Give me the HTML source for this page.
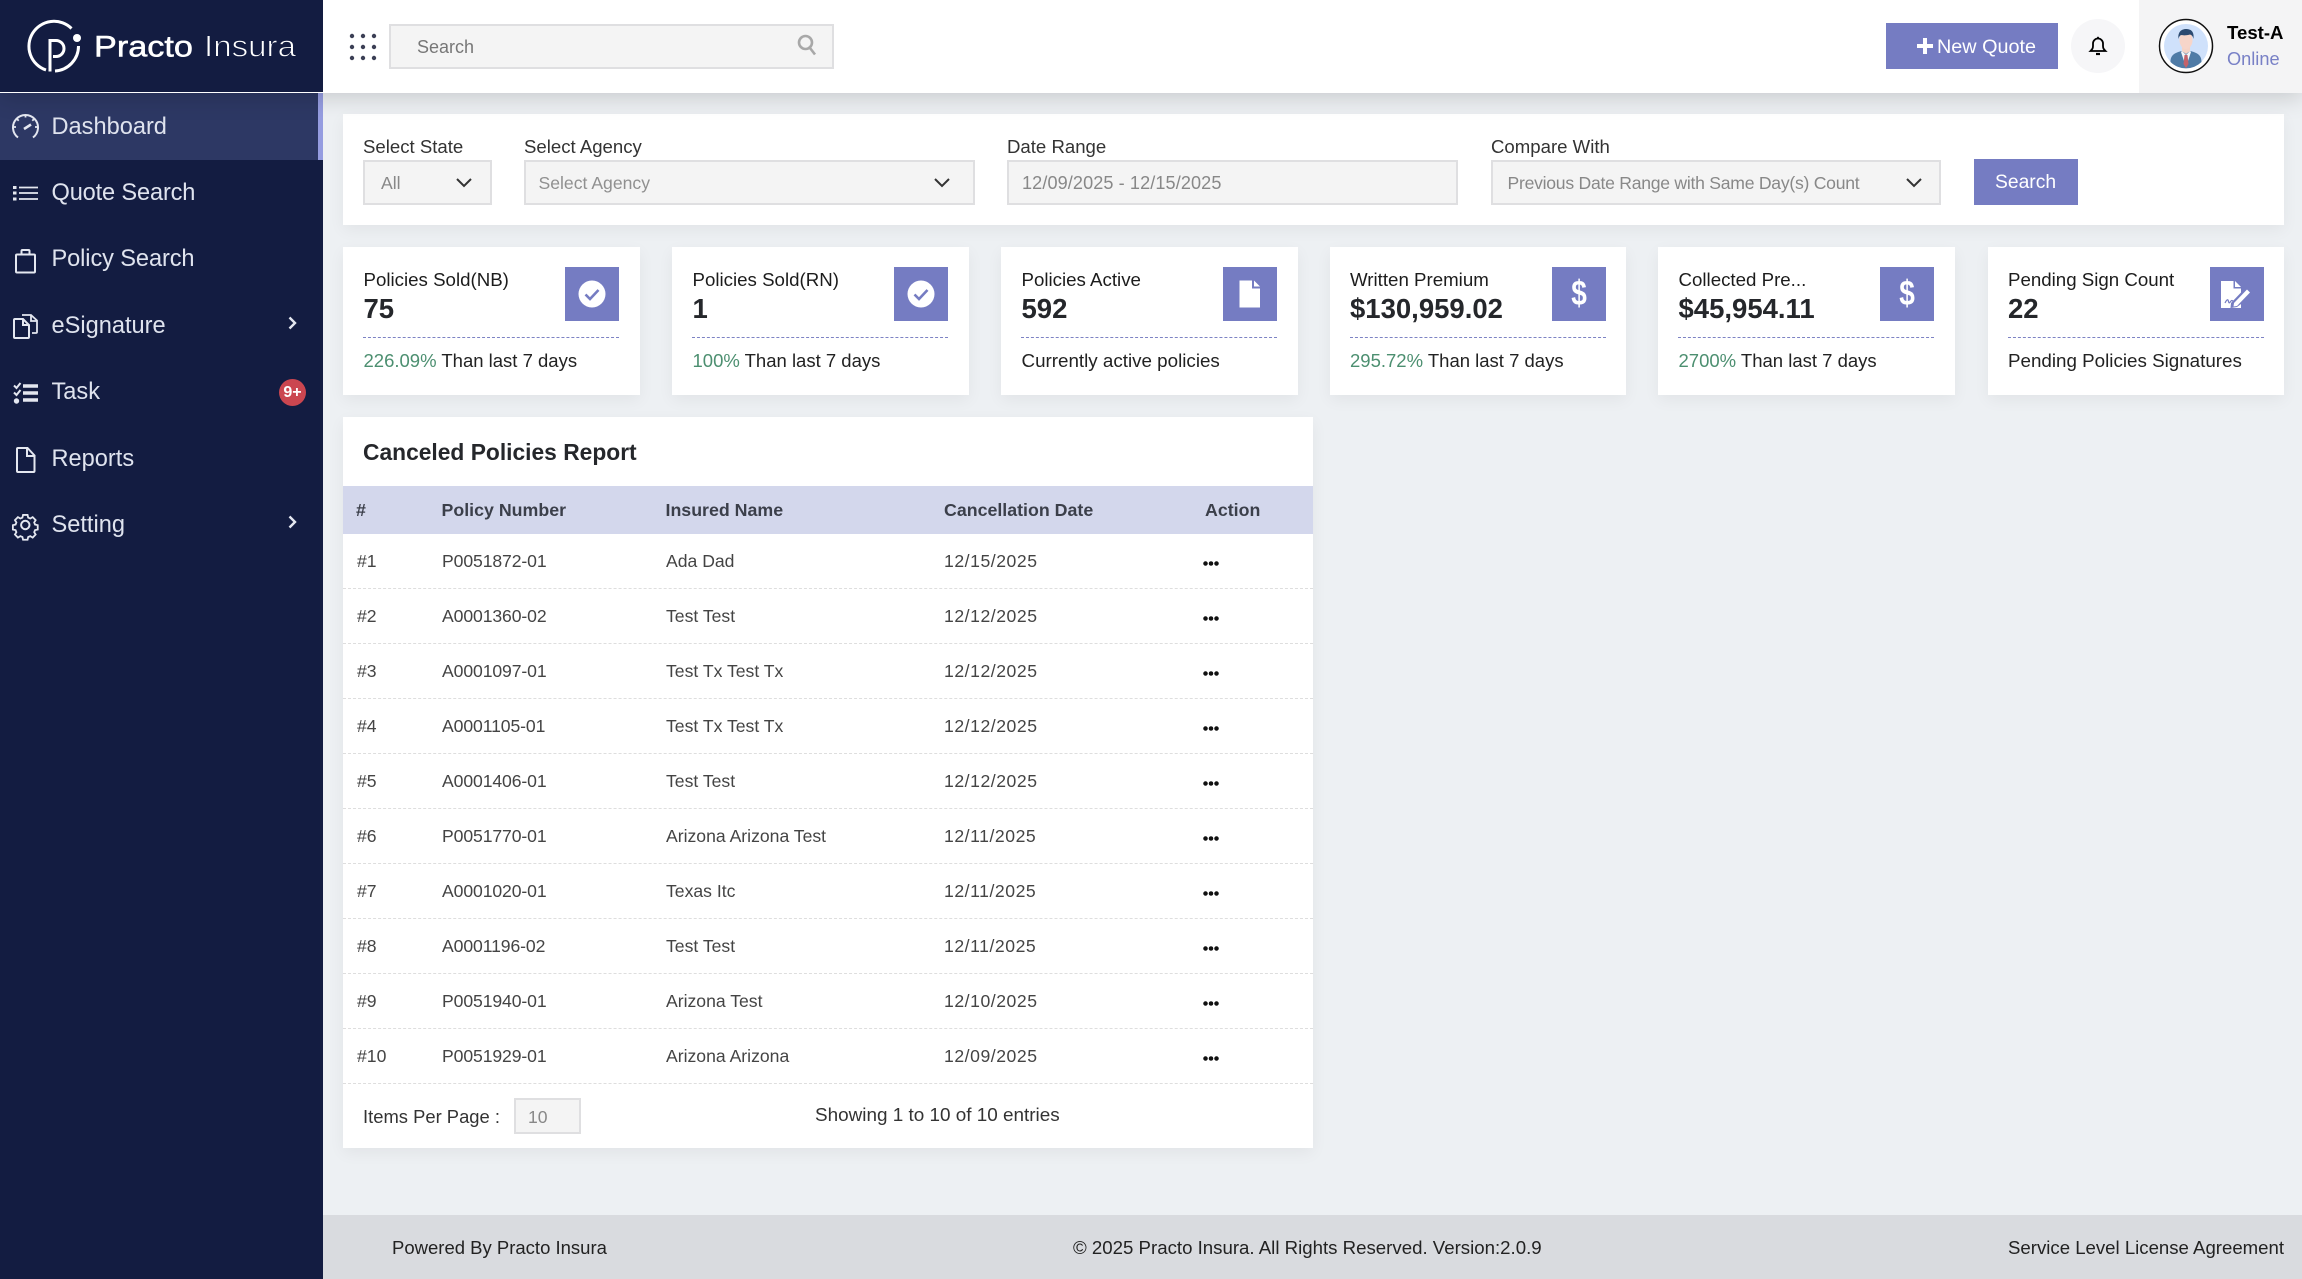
<!DOCTYPE html>
<html lang="en">
<head>
<meta charset="utf-8">
<title>Practo Insura Dashboard</title>
<style>
html,body{margin:0;padding:0;width:2302px;height:1279px;overflow:hidden;background:#edf0f3;font-family:"Liberation Sans",Arial,sans-serif;color:#222}
*{box-sizing:border-box}
.a{position:absolute}
.t{position:absolute;white-space:nowrap;line-height:30px;height:30px}
#side{position:absolute;left:0;top:0;width:323px;height:1279px;background:#131c41}
#hdr{position:absolute;left:0;top:0;width:2302px;height:93px;background:#fff;box-shadow:0 4px 22px rgba(0,0,0,.17);z-index:5}
#logo{position:absolute;left:0;top:0;width:323px;height:92px;background:#131c41}
.nav{position:absolute;left:51.5px;color:#dfe3ee;font-size:23.6px;white-space:nowrap;line-height:30px}
.ni{position:absolute;left:0;overflow:visible}
.card{position:absolute;background:#fff;box-shadow:0 5px 15px rgba(0,0,0,.05)}
.ctl{position:absolute;background:#f4f4f4;border:2px solid #dfdfe1;top:160px;height:45px}
.lab{font-size:18.6px;color:#333;top:132px}
.val{font-size:17.6px;color:#888;top:167.5px}
.stat{top:247px;width:296.5px;height:148px}
.stat .ti{left:20.5px;top:18px;font-size:18.7px;color:#1c1c1c}
.stat .v{left:20.5px;top:47px;font-size:27.5px;font-weight:bold;color:#25272b}
.stat .ic{position:absolute;left:222px;top:20px;width:54px;height:54px;background:#757cc2}
.stat .ic svg{position:absolute;left:0;top:0}
.stat .ln{position:absolute;left:20px;width:256px;top:90px;border-top:1.5px dashed #7d83c4}
.stat .f{left:20.5px;top:98.5px;font-size:18.8px;color:#222}
.stat .f.s{font-size:18.5px}
.stat .f b{font-weight:normal;color:#4c8f70}
.th{position:absolute;top:494.5px;font-size:17.8px;font-weight:bold;color:#3b3f4a;white-space:nowrap;line-height:30px}
.row{position:absolute;left:343px;width:970px;height:55px;border-bottom:1px dashed #dedede;z-index:1}
.row span{position:absolute;top:12px;font-size:17.6px;line-height:30px;color:#444;white-space:nowrap}
.row span:nth-child(1){left:14px}
.row span:nth-child(2){left:99px;letter-spacing:-.1px}
.row span:nth-child(3){left:323px}
.row span:nth-child(4){left:601px;letter-spacing:.55px}
.row i{position:absolute;left:859.5px;top:26.5px;width:16px;height:5px;background:radial-gradient(circle at 2.5px 2.5px,#111 2.1px,transparent 2.4px) 0 0/5.5px 5px repeat-x}
.dl{left:0;width:54px;top:11px;text-align:center;font-size:33px;font-weight:bold;color:#fff;transform:scale(.85,1.08)}
</style>
</head>
<body>
<div id="side">
  <div class="a" style="left:0;top:93px;width:323px;height:67px;background:#2d3864"></div>
  <div class="a" style="left:318px;top:93px;width:5px;height:67px;background:#959ce0"></div>

  <svg class="ni" style="top:0" width="60" height="560" fill="none" stroke="#e4e7f0" stroke-width="2">
    <!-- gauge -->
    <path d="M18 137.5a12.5 12.5 0 1 1 15 0"/><path d="M13.5 127h2.5M35 127h2.5M25.5 115v2.5M17 119l1.7 1.7M34 119l-1.7 1.7" stroke-width="1.8"/>
    <path d="M24 129l7-4.500" stroke-width="2.600"/>
    <!-- list -->
    <path d="M19 187.500h19M19 193h19M19 199h19" stroke-width="1.700"/>
    <path d="M13 187.500h3.500M13 193h3.500M13 199h3.500" stroke-width="3"/>
    <!-- clipboard -->
    <rect x="16" y="254.500" width="19" height="18" rx="1"/><path d="M21.500 254.500v-3.500a1 1 0 0 1 1-1h6a1 1 0 0 1 1 1v3.500"/>
    <!-- esign -->
    <path d="M14 320a1 1 0 0 1 1-1h8l6 6v12a1 1 0 0 1-1 1h-13a1 1 0 0 1-1-1z"/><path d="M23 319v6h6"/>
    <path d="M22 315h9l6 5.500v11.500a1 1 0 0 1-1 1h-4" stroke-width="1.800"/><path d="M31 315v6h6" stroke-width="1.800"/>
    <!-- task -->
    <path d="M23 386h15M23 393h15M23 400h15" stroke-width="3.400"/>
    <path d="M14 385.500l2.500 2.500 4-5M14 392.500l2.500 2.500 4-5" stroke-width="2"/>
    <circle cx="16.500" cy="401" r="2.700" fill="#e4e7f0" stroke="none"/>
    <!-- report -->
    <path d="M17 449a1 1 0 0 1 1-1h9.500l7 7.500v15.500a1 1 0 0 1-1 1h-15.500a1 1 0 0 1-1-1z"/><path d="M27 448v8h7.500"/>
    <!-- gear -->
    <circle cx="25.300" cy="525" r="4.200"/>
    <path transform="translate(25.300 525) scale(.9) translate(-25.300 -525)" d="M22.800 513.800h5l.7 3 2.300 1 2.700-1.600 3.300 3.400-1.600 2.600.9 2.300 3 .7v4.800l-3 .7-.9 2.300 1.600 2.600-3.300 3.400-2.700-1.600-2.300 1-.7 3h-5l-.7-3-2.300-1-2.700 1.600-3.300-3.400 1.600-2.600-.9-2.300-3-.7v-4.800l3-.7.9-2.300-1.600-2.600 3.300-3.400 2.700 1.600 2.300-1z" stroke-width="2"/>
  </svg>

  <div class="nav" style="top:112px">Dashboard</div>
  <div class="nav" style="top:178px;letter-spacing:-.15px">Quote Search</div>
  <div class="nav" style="top:244px;letter-spacing:-.1px">Policy Search</div>
  <div class="nav" style="top:311px">eSignature</div>
  <div class="nav" style="top:377px">Task</div>
  <div class="nav" style="top:444px">Reports</div>
  <div class="nav" style="top:510px">Setting</div>

  <svg class="a" style="left:285px;top:314px" width="16" height="18" fill="none" stroke="#e4e7f0" stroke-width="2.400"><path d="M4.500 3.500l5.500 5.500-5.500 5.500"/></svg>
  <svg class="a" style="left:285px;top:513px" width="16" height="18" fill="none" stroke="#e4e7f0" stroke-width="2.400"><path d="M4.500 3.500l5.500 5.500-5.500 5.500"/></svg>
  <div class="a" style="left:279px;top:378.500px;width:27px;height:27px;border-radius:50%;background:#cb4650;color:#fff;font-size:16px;font-weight:bold;text-align:center;line-height:27px">9+</div>
</div>

<div id="hdr">
  <div id="logo">
    <svg width="323" height="92" fill="none">
      <g stroke="#fff" stroke-width="3">
        <path d="M71.500 28.500A25 25 0 1 0 46 70"/>
        <path d="M78.500 46A25 25 0 0 1 55 71"/>
        <path d="M50 71.500V40.500H56A8 8 0 0 1 56 56.500H53"/>
      </g>
      <circle cx="77" cy="38" r="4" fill="#fff"/>
      <text x="94" y="56.500" font-family="Liberation Sans" font-size="30" fill="#fff" stroke="#fff" stroke-width=".5" textLength="99" lengthAdjust="spacingAndGlyphs">Practo</text>
      <text x="204" y="56.500" font-family="Liberation Sans" font-size="31" fill="#fff" stroke="#131c41" stroke-width=".9" textLength="92" lengthAdjust="spacingAndGlyphs">Insura</text>
    </svg>
  </div>
  <svg class="a" style="left:345px;top:30px" width="36" height="34" fill="#3b3f55">
    <circle cx="7" cy="6" r="2.200"/><circle cx="18" cy="6" r="2.200"/><circle cx="29" cy="6" r="2.200"/>
    <circle cx="7" cy="17" r="2.200"/><circle cx="18" cy="17" r="2.200"/><circle cx="29" cy="17" r="2.200"/>
    <circle cx="7" cy="28" r="2.200"/><circle cx="18" cy="28" r="2.200"/><circle cx="29" cy="28" r="2.200"/>
  </svg>
  <div class="a" style="left:389px;top:24px;width:445px;height:45px;background:#f4f4f4;border:2px solid #dfdfe1"></div>
  <div class="t" style="left:417px;top:31.500px;font-size:18px;color:#777">Search</div>
  <svg class="a" style="left:796px;top:33px" width="22" height="24" fill="none" stroke="#a8a8a8" stroke-width="2.600"><circle cx="9.500" cy="9.500" r="6.500"/><path d="M14 15l5 6.500"/></svg>

  <div class="a" style="left:1886px;top:23px;width:172px;height:46px;background:#757cc2"></div>
  <div class="a" style="left:1917px;top:44px;width:16px;height:4px;background:#fff"></div>
  <div class="a" style="left:1923px;top:38px;width:4px;height:16px;background:#fff"></div>
  <div class="t" style="left:1937px;top:31.500px;font-size:19.800px;color:#fff">New Quote</div>

  <div class="a" style="left:2071px;top:19px;width:54px;height:54px;border-radius:50%;background:#f6f6f8"></div>
  <svg class="a" style="left:2088px;top:36px" width="20" height="20" fill="none" stroke="#000" stroke-width="1.800"><path d="M2.500 15c1.500-1.500 2.500-2.500 2.500-5v-2.500a5 5 0 0 1 10 0v2.500c0 2.500 1 3.500 2.500 5z"/><path d="M8 18h4" stroke-width="2.200"/><path d="M10 .8v2"/></svg>

  <div class="a" style="left:2139px;top:0;width:163px;height:93px;background:#f4f4f5"></div>
  <svg class="a" style="left:2158px;top:18px" width="56" height="56">
    <circle cx="28" cy="28" r="26.500" fill="#fff" stroke="#111" stroke-width="1.500"/>
    <circle cx="28" cy="28" r="22" fill="#cfe1fb"/>
    <path d="M12.500 44c0-7 4-9 11-11l4.500 2 4.500-2c7 2 11 4 11 11a22 22 0 0 1-31 0z" fill="#4f7ba6"/>
    <path d="M24 33l4 3 4-3v-4h-8z" fill="#f5d3c6"/>
    <path d="M24 33l4 4 4-4 1 1-5 15-5-15z" fill="#f5f5f7"/>
    <path d="M26.500 37h3l1 9-2.500 4-2.500-4z" fill="#c4626a"/>
    <ellipse cx="28" cy="22" rx="6.500" ry="9" fill="#f7d5c9"/>
    <path d="M20.500 21c-1-7 3-10 7.500-10s8.500 2 7.500 10c-.5-3-2-4-3.500-4.500-3 1-7 1-9 .5-1.500 1-2.200 2-2.500 4z" fill="#2c4a70"/>
  </svg>
  <div class="t" style="left:2227px;top:18px;font-size:18.600px;font-weight:bold;color:#000">Test-A</div>
  <div class="t" style="left:2227px;top:44px;font-size:18.200px;color:#7880c6">Online</div>
</div>

<!-- Filter card -->
<div class="card" style="left:343px;top:114px;width:1941px;height:111px"></div>
<div class="t lab" style="left:363px">Select State</div>
<div class="t lab" style="left:524px">Select Agency</div>
<div class="t lab" style="left:1007px">Date Range</div>
<div class="t lab" style="left:1491px">Compare With</div>
<div class="ctl" style="left:363px;width:129px"></div>
<div class="ctl" style="left:524px;width:451px"></div>
<div class="ctl" style="left:1007px;width:451px"></div>
<div class="ctl" style="left:1491px;width:450px"></div>
<div class="t val" style="left:381px">All</div>
<div class="t val" style="left:538.500px;color:#909090">Select Agency</div>
<div class="t val" style="left:1022px;font-size:18.100px;letter-spacing:.1px">12/09/2025 - 12/15/2025</div>
<div class="t val" style="left:1507.500px;letter-spacing:-.26px">Previous Date Range with Same Day(s) Count</div>
<svg class="a" style="left:455px;top:176px" width="18" height="14" fill="none" stroke="#333" stroke-width="2"><path d="M2 3l7 7 7-7"/></svg>
<svg class="a" style="left:933px;top:176px" width="18" height="14" fill="none" stroke="#333" stroke-width="2"><path d="M2 3l7 7 7-7"/></svg>
<svg class="a" style="left:1905px;top:176px" width="18" height="14" fill="none" stroke="#333" stroke-width="2"><path d="M2 3l7 7 7-7"/></svg>
<div class="a" style="left:1974px;top:159px;width:104px;height:46px;background:#757cc2"></div>
<div class="t" style="left:1995px;top:168px;font-size:19.300px;color:#fff">Search</div>

<!-- Stat cards -->
<div class="card stat" style="left:343px">
  <div class="t ti">Policies Sold(NB)</div><div class="t v">75</div>
  <div class="ic"><svg width="54" height="54"><circle cx="27" cy="27" r="13.500" fill="#fff"/><path d="M20.500 27.500l4.500 4.500 8.500-9" fill="none" stroke="#757cc2" stroke-width="2.600"/></svg></div>
  <div class="ln"></div><div class="t f s"><b>226.09%</b> Than last 7 days</div>
</div>
<div class="card stat" style="left:672px">
  <div class="t ti">Policies Sold(RN)</div><div class="t v">1</div>
  <div class="ic"><svg width="54" height="54"><circle cx="27" cy="27" r="13.500" fill="#fff"/><path d="M20.500 27.500l4.500 4.500 8.500-9" fill="none" stroke="#757cc2" stroke-width="2.600"/></svg></div>
  <div class="ln"></div><div class="t f s"><b>100%</b> Than last 7 days</div>
</div>
<div class="card stat" style="left:1001px">
  <div class="t ti">Policies Active</div><div class="t v">592</div>
  <div class="ic"><svg width="54" height="54"><path d="M16.500 13.500h12.500v8h8v19h-20.500z" fill="#fff"/><path d="M31 13.500l6 6h-6z" fill="#fff"/></svg></div>
  <div class="ln"></div><div class="t f">Currently active policies</div>
</div>
<div class="card stat" style="left:1329.500px">
  <div class="t ti">Written Premium</div><div class="t v">$130,959.02</div>
  <div class="ic"><div class="t dl">$</div></div>
  <div class="ln"></div><div class="t f s"><b>295.72%</b> Than last 7 days</div>
</div>
<div class="card stat" style="left:1658px">
  <div class="t ti">Collected Pre...</div><div class="t v">$45,954.11</div>
  <div class="ic"><div class="t dl">$</div></div>
  <div class="ln"></div><div class="t f s"><b>2700%</b> Than last 7 days</div>
</div>
<div class="card stat" style="left:1987.500px">
  <div class="t ti">Pending Sign Count</div><div class="t v">22</div>
  <div class="ic"><svg width="54" height="54"><path d="M11 14h12.500v7.500h7.500v4L21 36l-.5 5H11z" fill="#fff"/><path d="M25 14l6 6h-6z" fill="#fff"/><path d="M15 36c2-4 3-4 3.500-1.500s1.500 1 2.500-.5 2 .5 3 .5" fill="none" stroke="#757cc2" stroke-width="1.200"/><path d="M24 36l13-13.500 3 3-13 13.500-3.500.5z" fill="#fff"/><path d="M21 41h10v-4l-4 3z" fill="#fff"/></svg></div>
  <div class="ln"></div><div class="t f">Pending Policies Signatures</div>
</div>

<!-- Table card -->
<div class="card" style="left:343px;top:417px;width:970px;height:731px"></div>
<div class="t" style="left:363px;top:437px;font-size:22.800px;font-weight:bold;color:#25272b;z-index:1">Canceled Policies Report</div>
<div class="a" style="left:343px;top:486px;width:970px;height:48px;background:#d3d7ec"></div>
<div class="th" style="left:356px">#</div>
<div class="th" style="left:441.500px">Policy Number</div>
<div class="th" style="left:665.500px">Insured Name</div>
<div class="th" style="left:944px">Cancellation Date</div>
<div class="th" style="left:1205px">Action</div>

<div class="row" style="top:534px"><span>#1</span><span>P0051872-01</span><span>Ada Dad</span><span>12/15/2025</span><i></i></div>
<div class="row" style="top:589px"><span>#2</span><span>A0001360-02</span><span>Test Test</span><span>12/12/2025</span><i></i></div>
<div class="row" style="top:644px"><span>#3</span><span>A0001097-01</span><span>Test Tx Test Tx</span><span>12/12/2025</span><i></i></div>
<div class="row" style="top:699px"><span>#4</span><span>A0001105-01</span><span>Test Tx Test Tx</span><span>12/12/2025</span><i></i></div>
<div class="row" style="top:754px"><span>#5</span><span>A0001406-01</span><span>Test Test</span><span>12/12/2025</span><i></i></div>
<div class="row" style="top:809px"><span>#6</span><span>P0051770-01</span><span>Arizona Arizona Test</span><span>12/11/2025</span><i></i></div>
<div class="row" style="top:864px"><span>#7</span><span>A0001020-01</span><span>Texas Itc</span><span>12/11/2025</span><i></i></div>
<div class="row" style="top:919px"><span>#8</span><span>A0001196-02</span><span>Test Test</span><span>12/11/2025</span><i></i></div>
<div class="row" style="top:974px"><span>#9</span><span>P0051940-01</span><span>Arizona Test</span><span>12/10/2025</span><i></i></div>
<div class="row" style="top:1029px"><span>#10</span><span>P0051929-01</span><span>Arizona Arizona</span><span>12/09/2025</span><i></i></div>

<div class="t" style="left:363px;top:1101.500px;font-size:18.400px;color:#333">Items Per Page :</div>
<div class="a" style="left:514px;top:1098px;width:67px;height:36px;background:#f4f4f4;border:2px solid #dfdfe1"></div>
<div class="t" style="left:528px;top:1101.500px;font-size:17.600px;color:#888">10</div>
<div class="t" style="left:815px;top:1101px;font-size:18.900px;color:#333">Showing 1 to 10 of 10 entries</div>

<!-- Footer -->
<div class="a" style="left:323px;top:1215px;width:1979px;height:64px;background:#d9dbdf"></div>
<div class="t" style="left:392px;top:1233px;font-size:18.500px;color:#222">Powered By Practo Insura</div>
<div class="t" style="left:1073px;top:1233px;font-size:18.650px;color:#222">© 2025 Practo Insura. All Rights Reserved. Version:2.0.9</div>
<div class="t" style="right:18px;top:1233px;font-size:18.600px;color:#222">Service Level License Agreement</div>
</body>
</html>
